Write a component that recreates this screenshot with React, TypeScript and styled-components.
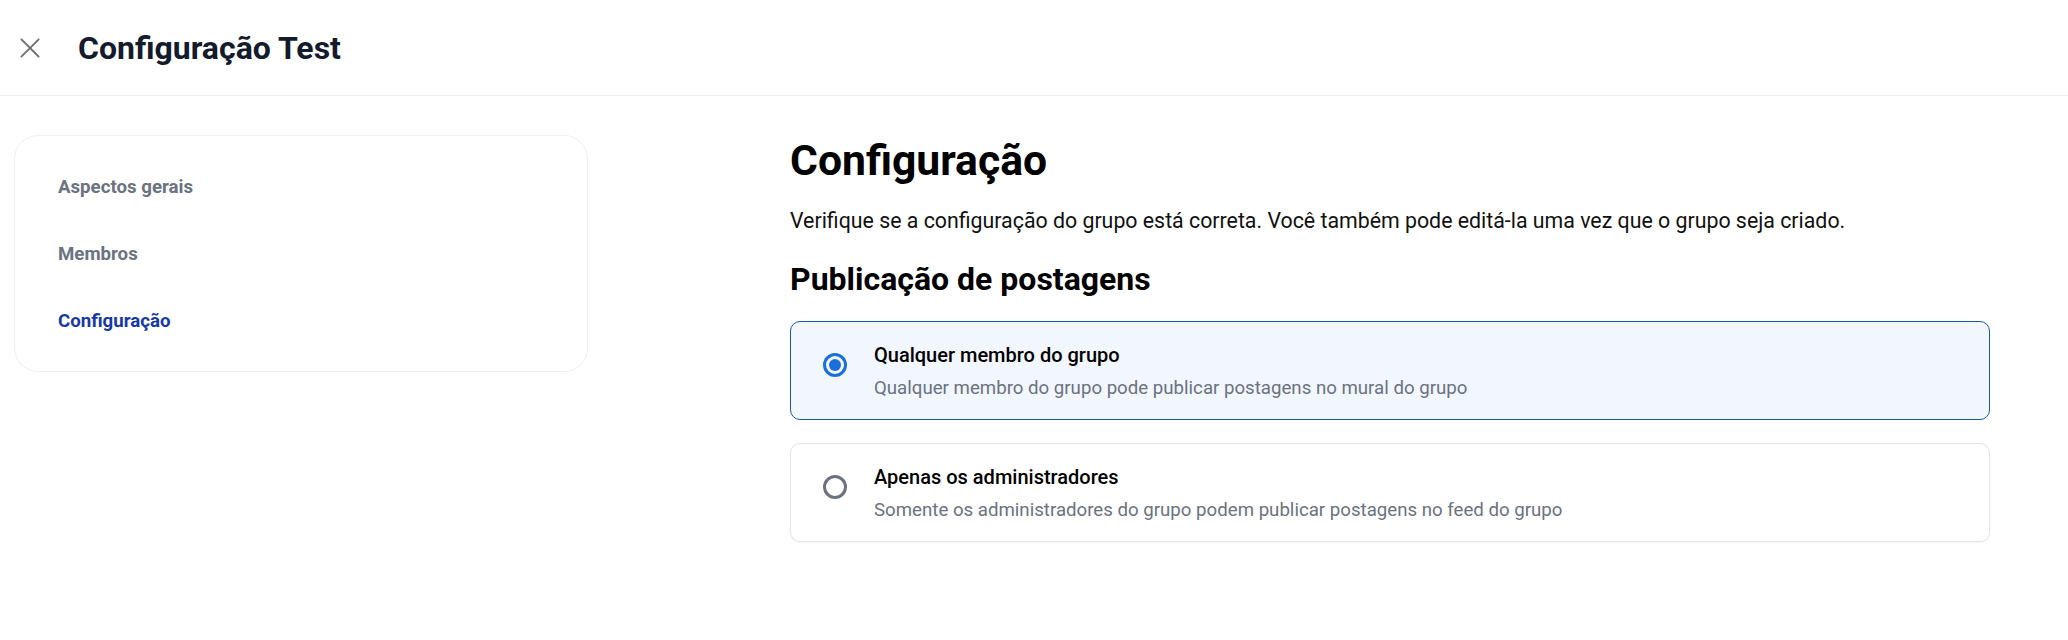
import React, { useState } from "react";
import styled, { createGlobalStyle } from "styled-components";

const GlobalStyle = createGlobalStyle`
  * { box-sizing: border-box; }
  html, body { margin: 0; padding: 0; background: #ffffff; }
  body { font-family: Roboto, "Liberation Sans", Arial, sans-serif; color: #111111; }
`;

const Page = styled.div`
  width: 2068px;
  min-height: 640px;
  background: #ffffff;
`;

const Header = styled.header`
  height: 96px;
  display: flex;
  align-items: center;
  padding-left: 20px;
  gap: 38px;
  border-bottom: 1px solid #efefef;
`;

const CloseButton = styled.button`
  width: 20px;
  height: 20px;
  padding: 0;
  border: 0;
  background: transparent;
  display: flex;
  align-items: center;
  justify-content: center;
  cursor: pointer;
  color: #707070;
`;

const HeaderTitle = styled.h1`
  margin: 0;
  font-size: 24pt;
  line-height: 40px;
  font-weight: 700;
  color: #141b2d;
`;

const Body = styled.div`
  display: flex;
  align-items: flex-start;
  gap: 202px;
  padding: 39px 0 0 14px;
`;

const SideNav = styled.nav`
  width: 574px;
  border: 1px solid #f0f0f0;
  border-radius: 24px;
  padding: 17px 0;
  display: flex;
  flex-direction: column;
`;

const NavItem = styled.a<{ $active?: boolean }>`
  display: flex;
  align-items: center;
  height: 67px;
  padding-left: 43px;
  font-size: 14pt;
  font-weight: 700;
  text-decoration: none;
  color: ${(p) => (p.$active ? "#1638a8" : "#6b7280")};
  cursor: pointer;
`;

const Main = styled.main`
  width: 1200px;
  display: flex;
  flex-direction: column;
`;

const PageTitle = styled.h2`
  margin: 0;
  font-size: 32pt;
  line-height: 50px;
  font-weight: 700;
  color: #000000;
`;

const Intro = styled.p`
  margin: 22px 0 0;
  font-size: 16pt;
  line-height: 28px;
  color: #111111;
`;

const SectionTitle = styled.h3`
  margin: 24px 0 0;
  font-size: 24pt;
  line-height: 40px;
  font-weight: 700;
  color: #000000;
`;

const Options = styled.div`
  margin-top: 22px;
  display: flex;
  flex-direction: column;
  gap: 23px;
`;

const OptionCard = styled.label<{ $selected?: boolean }>`
  display: flex;
  align-items: flex-start;
  gap: 27px;
  padding: 19px 32px 18px;
  border-radius: 10px;
  border: 1px solid ${(p) => (p.$selected ? "#1d58a4" : "#e3e4e8")};
  background: ${(p) => (p.$selected ? "#f2f6fe" : "#ffffff")};
  box-shadow: ${(p) => (p.$selected ? "none" : "0 1px 2px rgba(0,0,0,0.05)")};
  cursor: pointer;
`;

const Radio = styled.span<{ $checked?: boolean }>`
  flex: none;
  width: 24px;
  height: 24px;
  margin-top: 12px;
  border-radius: 50%;
  border: 3px solid ${(p) => (p.$checked ? "#1b6fdc" : "#6b7280")};
  display: flex;
  align-items: center;
  justify-content: center;
  &::after {
    content: "";
    width: 12px;
    height: 12px;
    border-radius: 50%;
    background: #1b6fdc;
    display: ${(p) => (p.$checked ? "block" : "none")};
  }
`;

const OptionText = styled.div`
  display: flex;
  flex-direction: column;
  gap: 6px;
`;

const OptionTitle = styled.span`
  font-size: 15pt;
  line-height: 28px;
  font-weight: 500;
  color: #000000;
`;

const OptionDesc = styled.span`
  font-size: 14pt;
  line-height: 26px;
  color: #6b7280;
`;

const CloseIcon = () => (
  <svg width="20" height="20" viewBox="0 0 20 20" fill="none" stroke="currentColor" strokeWidth="1.8" strokeLinecap="square">
    <path d="M1.5 1.5 L18.5 18.5 M18.5 1.5 L1.5 18.5" />
  </svg>
);

const navItems = ["Aspectos gerais", "Membros", "Configuração"];

const options = [
  {
    id: "all",
    title: "Qualquer membro do grupo",
    desc: "Qualquer membro do grupo pode publicar postagens no mural do grupo",
  },
  {
    id: "admins",
    title: "Apenas os administradores",
    desc: "Somente os administradores do grupo podem publicar postagens no feed do grupo",
  },
];

export default function App() {
  const [selected, setSelected] = useState("all");
  return (
    <Page>
      <GlobalStyle />
      <Header>
        <CloseButton aria-label="Fechar">
          <CloseIcon />
        </CloseButton>
        <HeaderTitle>Configuração Test</HeaderTitle>
      </Header>
      <Body>
        <SideNav>
          {navItems.map((item) => (
            <NavItem key={item} $active={item === "Configuração"}>
              {item}
            </NavItem>
          ))}
        </SideNav>
        <Main>
          <PageTitle>Configuração</PageTitle>
          <Intro>
            Verifique se a configuração do grupo está correta. Você também pode editá-la uma vez que o grupo seja criado.
          </Intro>
          <SectionTitle>Publicação de postagens</SectionTitle>
          <Options>
            {options.map((o) => (
              <OptionCard key={o.id} $selected={selected === o.id} onClick={() => setSelected(o.id)}>
                <Radio $checked={selected === o.id} />
                <OptionText>
                  <OptionTitle>{o.title}</OptionTitle>
                  <OptionDesc>{o.desc}</OptionDesc>
                </OptionText>
              </OptionCard>
            ))}
          </Options>
        </Main>
      </Body>
    </Page>
  );
}
